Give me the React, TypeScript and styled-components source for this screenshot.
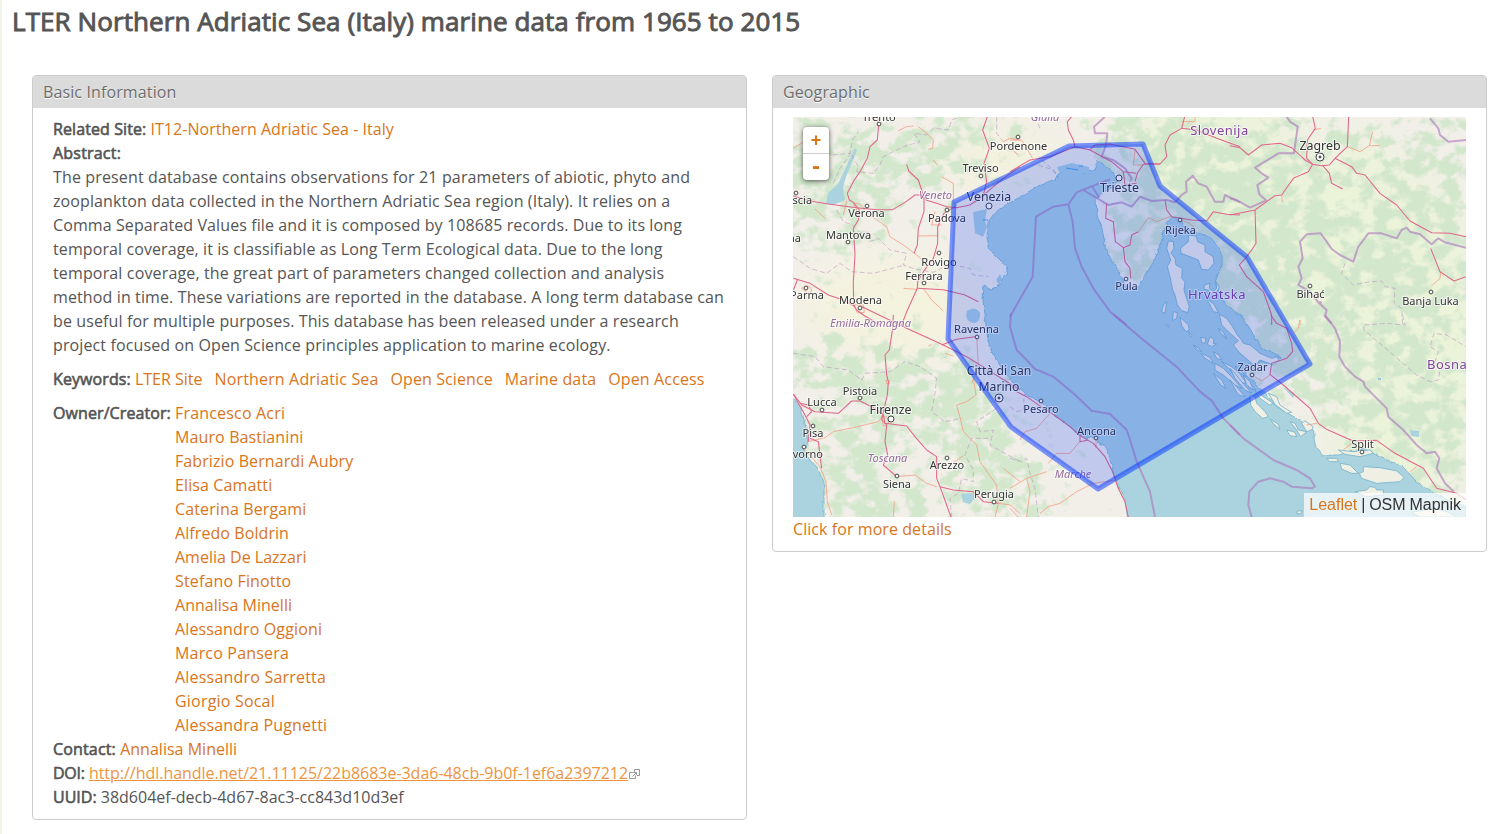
import React from 'react';
import styled, { createGlobalStyle } from 'styled-components';

const GlobalStyle = createGlobalStyle`
  body {
    margin: 0;
    background: #fff;
    color: #555;
    font: 16px/24px 'Open Sans', sans-serif;
  }
`;

const Page = styled.main`
  box-sizing: border-box;
  width: 1502px;
  height: 834px;
  overflow: hidden;
  border-left: 2px solid #f2f4ec;
`;

const Title = styled.h1`
  margin: 0;
  padding: 3px 0 0 10px;
  height: 71px;
  box-sizing: border-box;
  font-size: 26px;
  line-height: 36px;
  font-weight: 400;
  letter-spacing: 0.085px;
  white-space: nowrap;
  -webkit-text-stroke: 0.95px #555;
`;

const Columns = styled.div`
  display: grid;
  grid-template-columns: 715px 715px;
  gap: 25px;
  align-items: start;
  padding: 4px 0 0 30px;
`;

const Panel = styled.section`
  border: 1px solid #ccc;
  border-radius: 4px;
  overflow: hidden;
`;

const PanelHeader = styled.h2`
  margin: 0;
  padding: 4px 10px;
  background: #dbdbdb;
  color: #6c6c6c;
  font-size: 16px;
  line-height: 24px;
  font-weight: 400;
  letter-spacing: 0.12px;
  text-shadow: 0 1px 0 #fff;
`;

const PanelBody = styled.div`
  padding: 9px 20px 10px;
`;

const Label = styled.span<{ $track?: number }>`
  letter-spacing: ${(p) => p.$track ?? 0.09}px;
  -webkit-text-stroke: 0.62px #555;
`;

const Link = styled.a<{ $track?: number }>`
  color: #d9751a;
  letter-spacing: ${(p) => p.$track ?? 0}px;
  text-decoration: none;
`;

const HandleLink = styled(Link)`
  color: #ee9440;
  text-decoration: underline;
`;

const Abstract = styled.p`
  margin: 0 0 10px;
`;

const AbstractLine = styled.span<{ $track: number }>`
  display: block;
  white-space: nowrap;
  letter-spacing: ${(p) => p.$track}px;
`;

const Keywords = styled.div`
  display: flex;
  gap: 12px;
  margin-bottom: 10px;
`;

const Owners = styled.div`
  display: grid;
  grid-template-columns: 122px 1fr;
`;

const OwnerList = styled.div`
  display: flex;
  flex-direction: column;
  align-items: flex-start;
`;

const MapFrame = styled.div`
  position: relative;
  width: 673px;
  height: 400px;
  overflow: hidden;
  background: #f2efe9;
`;

const MapDrawing = styled.svg`
  display: block;
`;

const ZoomControl = styled.div`
  position: absolute;
  left: 10px;
  top: 10px;
  width: 26px;
  border-radius: 4px;
  background: #fff;
  box-shadow: 0 1px 5px rgba(0, 0, 0, 0.65);
`;

const ZoomButton = styled.div<{ $divided?: boolean }>`
  height: 26px;
  border-bottom: ${(p) => (p.$divided ? '1px solid #ccc' : '0')};
  color: #d9751a;
  text-align: center;
  font: bold 18px/26px 'Liberation Sans', sans-serif;
`;

const Minus = styled(ZoomButton)`
  font-size: 24px;
  line-height: 24px;
`;

const Attribution = styled.div`
  position: absolute;
  right: 0;
  bottom: 0;
  padding: 0 5px;
  background: rgba(255, 255, 255, 0.7);
  color: #333;
  font: 16px/24px 'Liberation Sans', sans-serif;
  word-spacing: -0.6px;
`;

const ExternalIcon = styled.svg`
  margin-left: 1px;
`;

const abstractLines: [string, number][] = [
  ['The present database contains observations for 21 parameters of abiotic, phyto and', 0.139],
  ['zooplankton data collected in the Northern Adriatic Sea region (Italy). It relies on a', 0.1],
  ['Comma Separated Values file and it is composed by 108685 records. Due to its long', 0.1],
  ['temporal coverage, it is classifiable as Long Term Ecological data. Due to the long', 0.097],
  ['temporal coverage, the great part of parameters changed collection and analysis', 0.146],
  ['method in time. These variations are reported in the database. A long term database can', 0.12],
  ['be useful for multiple purposes. This database has been released under a research', 0.115],
  ['project focused on Open Science principles application to marine ecology.', 0.12],
];

const keywords: [string, number][] = [
  ['Northern Adriatic Sea', 0.15], ['Open Science', 0.09], ['Marine data', 0.13], ['Open Access', 0.13],
];

const owners: [string, number][] = [
  ['Francesco Acri', 0.18], ['Mauro Bastianini', 0.12], ['Fabrizio Bernardi Aubry', 0.09], ['Elisa Camatti', 0.12],
  ['Caterina Bergami', 0.12], ['Alfredo Boldrin', 0.08], ['Amelia De Lazzari', 0], ['Stefano Finotto', 0.15],
  ['Annalisa Minelli', 0.02], ['Alessandro Oggioni', 0.14], ['Marco Pansera', 0.18], ['Alessandro Sarretta', 0.2],
  ['Giorgio Socal', 0.2], ['Alessandra Pugnetti', 0.18],
];

type Sheet = { x: number; y: number; roads?: string[]; minor?: string[]; borders?: string[]; regions?: string[] };

// Line work of the map, one sheet per map quadrant, at three units per pixel.
const sheets: Sheet[] = [
  {
    x: -3, y: -2,
    roads: [
      'M262,5 L266,30 262,75 240,95 232,130 210,170 190,200 172,235 178,255 190,262 208,285 205,315 190,340 195,420 190,500 191,570 200,585 220,600 270,630',
      'M10,243 L60,258 120,268 200,278 260,284 308,284 345,262 375,240 395,240 410,256 440,265 470,275 500,278 540,270 575,245 640,190 690,155',
      'M350,148 L356,168 385,195 395,225 402,255 402,290 385,340 382,390 372,415',
      'M592,5 L578,45 598,100 582,145 590,200 580,240 555,262',
      'M495,275 L462,295 443,335 443,385 430,430 400,470 383,500 382,520 350,590 335,630',
      'M382,520 L460,524 525,540 565,560',
      'M10,490 L60,505 115,540 160,555 195,575', 'M10,525 L22,495',
    ],
    minor: [
      'M240,300 L265,318 290,335 300,365 340,390 380,420 395,433', 'M10,100 L50,75 85,50', 'M325,47 L350,35 370,33',
      'M385,35 L410,55 430,75 428,100 415,103', 'M430,135 L442,150', 'M385,363 L443,362', 'M340,520 L382,523',
      'M400,520 L425,555 460,588', 'M455,185 L490,205 490,270', 'M640,80 L660,70 690,75 M650,90 L685,120', 'M170,258 L160,300 M75,282 L105,310',
      'M190,265 C215,260 240,295 205,294 Z', 'M435,290 L425,330 455,330', 'M35,520 C60,500 75,530 55,535 Z', 'M190,570 h30 l3,22 -20,2 Z',
    ],
    regions: [
      'M128,120 L180,115 188,75 205,50 M185,120 L205,155 200,170 250,175 270,150 280,125 305,112 340,95 390,80 372,55 410,60 430,40 475,45 485,15 510,5 M620,5 L620,55 640,80 665,95 690,95 M140,285 L160,320 188,330 208,352 242,352 238,380 265,370 300,405 350,415 340,450 375,462 430,472 480,448 540,460 550,480 595,485 M10,425 L60,460 110,475 150,445 185,470 250,475 345,450 M130,205 L150,160 190,105',
    ],
  },
  {
    x: 217, y: -2,
    roads: [
      'M185,5 L172,20 175,45 190,75 195,95 240,105 305,140 340,170 378,175 M0,170 L60,135 120,125 195,95 240,104 255,90 300,87 375,103 405,145 450,147',
      'M524,5 L515,40 480,60 465,90 470,125 450,147 400,148 382,175 375,200', 'M515,40 L560,45 620,70 690,95 M340,170 L345,210 380,205',
      'M290,265 L287,310 310,320 316,380 340,398 345,440 360,460 362,490 M340,398 L360,390 365,360 385,350', 'M465,255 L470,285 485,305 545,315 590,318 610,290 650,298 690,300',
    ],
    minor: ['M0,75 L35,75 68,130 M515,20 L555,20 555,5', 'M385,350 L415,308 440,320 485,303 M510,315 L540,325 555,340', 'M375,105 L370,150 400,150'],
    borders: [
      'M285,5 L252,35 255,55 292,55 288,90 275,125 310,135 345,160 365,190 360,200', 'M220,225 L295,270 335,262 365,275 390,245 425,258 470,255 495,262 515,240 530,230 528,200 548,182 565,205 590,215 615,260 640,260 645,240 690,262',
      'M0,605 L68,485 78,305 130,275 175,268 200,232 255,210 300,193 M175,268 L188,320 195,400 215,455 250,520 300,590 350,630 M245,212 L268,248',
    ],
    regions: ['M75,5 L90,40 M85,150 L130,165 145,190 L135,170 85,125'],
  },
  {
    x: 437, y: -2,
    roads: [
      'M0,92 L30,98 55,120 95,90 150,85 185,98 225,135 248,148 L235,170 190,190 155,240 135,242 75,285 0,300',
      'M248,5 L256,40 232,75 230,130 248,148 275,152 298,150 315,130 352,95 356,5', 'M315,130 L365,155 380,175 405,180 450,235 500,270 540,318 605,353 660,355 708,365',
      'M277,150 L298,175 305,205 338,222', 'M75,285 L78,385 65,405 50,425 28,450 50,485 100,530 125,600 125,630', 'M602,400 L630,470 672,498 708,485',
    ],
    minor: ['M352,95 L390,110 418,92 428,50 M418,92 L448,92', 'M250,45 L273,40', 'M605,512 L630,490 632,470 M155,240 L157,260 M210,615 L210,630'],
    borders: [
      'M170,5 L180,20 203,35 192,115 145,115 75,158 95,175 115,188 82,210 88,238 108,256 60,278 20,255 0,250',
      'M275,565 L268,560 M240,530 L205,510 215,490 205,455 218,430 210,380 230,358 272,355 290,380 305,402 330,420 370,440 385,395 415,355 455,355 500,370 515,345 530,338 540,350 570,358 605,388 625,370 645,382 708,398',
      'M600,10 L625,40 630,60 655,80 708,75', 'M240,530 L265,562 290,585 285,605 305,625',
    ],
    regions: ['M345,445 L335,475 370,510 420,500 455,498 465,515 495,520 492,565 515,580 518,630'],
  },
  {
    x: -3, y: 198,
    roads: [
      'M216,-25 L340,35 460,90 530,125 690,225', 'M310,0 L308,40 298,105 285,120 290,180 295,200 292,240 280,290 275,315 290,330 285,380 293,420 280,450 320,485',
      'M10,237 L35,270 75,290 145,295 185,258 210,258 245,275 280,300 285,325 350,333 375,365 410,405 440,425 440,490 450,515 470,570 483,606',
      'M10,237 L45,300 60,330 55,380 M30,265 L55,270 65,290 50,305 M60,370 L85,380 95,460 M450,515 L490,525 550,530 580,560 625,565 M455,90 L500,73 555,65',
    ],
    minor: [
      'M55,380 L105,368 130,350 190,338 265,320 278,303', 'M550,190 L558,240 530,260 500,270 512,315 520,350 560,390 570,440 620,510 625,565 615,606',
      'M320,485 L375,480 410,505 440,515', 'M42,400 L90,455 108,500 112,560 125,600 M490,443 L520,422 M545,205 L565,150 560,65 M640,460 L690,500 M625,565 L660,570 690,595 M313,560 L310,606 M415,93 l8,-4 M465,115 l25,8',
      'M275,305 C300,300 305,335 280,332 Z', 'M288,195 l10,2 0,10 -8,-1 Z',
    ],
    regions: ['M10,115 L75,125 100,155 175,165 215,195 225,175 300,170 345,140 390,155 440,190 435,235 425,290 465,320 515,310 M620,280 L560,320 570,350 610,345 600,390 690,440 M595,370 L545,370 525,420 550,465 550,500 515,490 505,535 480,550 485,606'],
  },
  {
    x: 217, y: 198,
    roads: ['M20,230 L50,245 100,280 125,295 180,335 215,365 L250,385 285,425 310,475 325,520 345,560 355,606', 'M210,360 L210,380 235,375'],
    minor: ['M120,295 L80,340 45,350 30,375 M210,378 L180,415 140,415 115,445', 'M320,495 L250,505 200,530 150,565 115,575 90,595 M258,370 L258,400 M0,520 L50,490 110,470 M50,490 L60,530 50,606 M0,580 L25,606'],
    borders: ['M3,-5 L0,35 20,105 50,135 75,162 130,185 190,235 245,287 300,297 350,345 362,380 380,440 420,530 435,606', 'M312,0 L400,75 500,155 570,230 605,257 640,310 690,360'],
    regions: ['M0,430 L35,440 50,430 60,475 75,520 85,606 M0,275 L20,290 40,285 42,250'],
  },
  {
    x: 437, y: 198,
    roads: ['M122,0 L140,25 170,40 185,85 188,110 170,130 125,145 120,178 160,210 240,280 265,325 290,343 340,365 370,378 440,376 495,415 580,460 620,520 680,535 708,555'],
    minor: ['M75,185 L95,198 120,180 M210,15 L205,40 190,55 M260,325 L230,330 M340,405 L365,385 M540,470 L560,455'],
    borders: [
      'M285,0 L315,40 330,80 328,125 345,155 375,185 400,200 405,215 470,280 475,305 520,345 560,390 590,415 615,410 628,430 620,460 645,505 672,530',
      'M0,330 L40,370 130,435 200,465 240,490 255,515 245,520 185,515 160,500 120,490 85,500 58,530 55,570 65,606',
    ],
    regions: ['M518,0 L525,30 470,25 400,30 402,45 560,180 600,200 625,195 630,165 615,140 625,110 600,95 612,55 650,60 708,95'],
  },
];

// Wooded areas: centre, radii and density.
const forests: [number, number, number, number, number][] = [
  [40, 70, 65, 70, 0.8], [130, 50, 70, 30, 0.7], [165, 10, 90, 25, 0.7], [365, 30, 65, 45, 0.8], [420, 80, 60, 60, 0.95],
  [480, 50, 50, 50, 0.8], [480, 130, 65, 55, 0.9], [455, 180, 50, 50, 0.95], [560, 35, 45, 35, 0.6], [560, 130, 60, 60, 0.6],
  [640, 60, 45, 60, 0.75], [625, 140, 60, 60, 0.65], [500, 230, 55, 55, 0.7], [600, 200, 80, 55, 0.65], [590, 270, 70, 60, 0.65],
  [640, 330, 50, 80, 0.7], [540, 290, 40, 40, 0.5], [345, 140, 40, 35, 0.8], [490, 210, 40, 30, 0.9], [500, 235, 35, 25, 0.85],
  [60, 245, 60, 30, 0.6], [120, 270, 80, 40, 0.8], [160, 300, 60, 45, 0.75], [70, 310, 60, 30, 0.6], [60, 355, 45, 45, 0.8],
  [90, 390, 50, 35, 0.75], [190, 335, 40, 50, 0.7], [170, 385, 40, 25, 0.6], [210, 365, 40, 45, 0.6], [240, 380, 35, 30, 0.6], [20, 260, 35, 30, 0.6],
  [340, 90, 25, 18, 0.7],
];

const meadows: [number, number, number, number][] = [
  [610, 170, 80, 110], [540, 170, 70, 60], [660, 240, 50, 100], [600, 330, 65, 70], [420, 60, 90, 90], [560, 90, 60, 70],
];

const kvarnerIslands = [
  'M55,93 L70,95 72,115 63,130 75,145 78,165 97,175 95,205 105,215 102,240 118,290 113,308 95,302 82,285 75,255 68,240 60,200 52,170 62,150 50,115 Z',
  'M115,75 L138,78 143,95 165,105 165,125 190,140 192,160 175,180 155,178 145,150 120,140 93,130 92,115 115,95 Z',
  'M50,275 L40,285 35,305 45,310 48,290 Z', 'M70,305 L82,308 80,325 68,332 Z', 'M50,343 l8,3 -2,6 -6,-3Z',
  'M90,322 L105,335 115,345 118,360 108,365 95,347 Z', 'M115,365 L127,376 122,380 Z',
  'M180,380 L192,388 190,400 200,402 185,410 172,403 Z', 'M152,382 L168,385 165,400 155,398 Z',
  'M163,225 L180,220 178,235 190,245 200,235 198,215 208,232 192,260 175,240 162,238 Z',
  'M170,265 L192,283 205,308 190,305 180,285 Z',
  'M208,312 L230,325 248,350 262,375 275,390 280,400 300,405 330,430 365,445 380,440 387,450 370,465 330,450 315,468 270,430 250,405 265,392 235,365 215,345 Z',
  'M130,405 L145,414 155,425 142,420 Z', 'M153,430 L180,442 190,460 165,445 Z', 'M190,425 L207,435 215,450 200,445 Z',
  'M195,460 L220,475 245,500 275,535 255,525 220,495 195,480 Z', 'M215,455 L245,470 268,490 290,520 275,518 240,480 Z',
  'M190,490 L215,510 228,535 212,525 Z', 'M280,495 L300,520 318,540 298,535 Z', 'M255,468 L275,485 288,500 265,485 Z',
  'M205,355 l15,12 10,20 -18,-18 Z',
];

const dalmatianIslands = [
  'M0,160 L15,175 35,200 65,235 45,225 15,190 Z', 'M0,195 L20,215 45,245 25,240 Z', 'M40,180 L60,200 70,225 50,210 Z',
  'M60,240 L75,245 80,265 105,290 115,305 98,310 75,290 62,270 Z', 'M75,228 L100,245 130,265 118,270 90,250 Z',
  'M115,235 L140,245 150,270 185,292 170,295 135,268 Z', 'M120,312 L145,328 150,343 132,328 Z',
  'M170,345 L195,352 200,365 180,362 Z', 'M180,320 L195,325 205,345 230,350 215,325 225,318 250,335 245,345 230,350 212,365 200,345 Z',
  'M290,430 L320,430 325,440 300,440 Z', 'M330,445 L360,450 385,475 365,475 335,462 Z',
  'M400,455 L450,458 500,468 522,487 510,500 440,505 395,490 388,475 400,470 Z',
  'M325,405 L370,410 420,405 430,415 390,425 345,418 Z',
  'M375,530 L410,525 420,515 435,517 440,525 460,525 460,540 410,545 Z', 'M545,592 L610,580 650,590 680,606 570,606 Z', 'M202,588 l14,0 -3,8 -12,0 Z', 'M635,555 L665,565 708,578 660,575 Z',
];

const labels: [string, number, number, number, string?][] = [
  ['Trento', 86, 4, 11], ['Pordenone', 225.5, 33, 11.1], ['Treviso', 187.5, 55, 11], ['Verona', 73.5, 100, 11],
  ['Padova', 154, 105, 11], ['Mantova', 55.5, 122, 11], ['Rovigo', 146, 149, 11.1], ['Ferrara', 131, 163, 11],
  ['Parma', 14, 182, 11], ['Modena', 67.5, 187, 11.1], ['Ravenna', 183.5, 216, 11.1], ['Pistoia', 67, 278, 11],
  ['Lucca', 29, 289, 11], ['Firenze', 97.5, 297, 12.4], ['Pisa', 20, 320, 11], ['Livorno', 10.5, 341, 11],
  ['Arezzo', 154, 352, 11], ['Siena', 104, 371, 11], ['Perugia', 201, 381, 11], ['Pesaro', 248, 296, 11],
  ['Ancona', 303.5, 318, 11.1], ['Venezia', 196, 84, 12.3], ['Trieste', 326.5, 75, 12.4], ['Rijeka', 387.5, 117, 11],
  ['Pula', 333.5, 173, 11], ['Zadar', 459.5, 254, 11], ['Split', 569.5, 331, 11], ['Bihać', 517.5, 181, 11],
  ['Banja Luka', 637.5, 188, 11], ['Zagreb', 527, 33, 12.4], ['Città di San', 206, 258, 12.2], ['Marino', 206, 274, 12.2],
  ['Brescia', 0.5, 87, 11], ['na', 1.5, 125, 11],
  ['Giulia', 252, 4, 11, 'region'], ['Veneto', 142.5, 82, 11, 'region'], ['Emilia-Romagna', 77.5, 210, 11, 'region'],
  ['Toscana', 94.5, 345, 11, 'region'], ['Marche', 280, 361, 11, 'region'],
  ['Slovenija', 426.5, 18, 13, 'country'], ['Hrvatska', 424, 182, 13, 'country'],
];

const towns: [number, number, number?][] = [
  [86, 7], [225, 20], [188, 59], [74, 89], [154, 93], [55, 125], [146, 136], [131, 166], [13, 171], [67, 191],
  [184, 220], [67, 281], [29, 293], [98, 302, 3], [20, 309], [11, 330], [154, 341], [104, 359], [201, 385],
  [248, 284], [303, 321], [196, 89, 3], [326, 61, 3], [387, 103], [333, 162], [459, 258], [569, 335],
  [517, 169], [638, 175], [3, 76],
];

const siteArea = '161,85 276,29 350,27 367,69 454,140 517,247 305,372 218,310 155,222';

const MapLines = ({ paths, color, width, dash, opacity = 1 }: {
  paths?: string[]; color: string; width: number; dash?: string; opacity?: number;
}) => (
  <g fill="none" stroke={color} strokeWidth={width * 3} strokeDasharray={dash} opacity={opacity} strokeLinejoin="round">
    {paths?.map((d) => <path key={d} d={d} />)}
  </g>
);

const AdriaticMap = () => (
  <MapDrawing width="673" height="400" viewBox="0 0 673 400">
    <defs>
      <filter id="woodland" x="0" y="0" width="673" height="400" filterUnits="userSpaceOnUse" colorInterpolationFilters="sRGB">
        <feGaussianBlur in="SourceGraphic" stdDeviation="14" result="soft" />
        <feTurbulence type="fractalNoise" baseFrequency="0.06 0.07" numOctaves="6" seed="8" result="noise" />
        <feColorMatrix in="noise" type="matrix" values="0 0 0 0 0  0 0 0 0 0  0 0 0 0 0  1 0 0 0 0" result="grain" />
        <feComposite in="soft" in2="grain" operator="arithmetic" k2="2.2" k3="5.5" k4="-3.75" result="mask" />
        <feFlood floodColor="#d3e7cd" />
        <feComposite in2="mask" operator="in" />
      </filter>
      <filter id="meadow" x="0" y="0" width="673" height="400" filterUnits="userSpaceOnUse">
        <feGaussianBlur stdDeviation="22" />
      </filter>
      <filter id="shore" x="-5%" y="-5%" width="110%" height="110%">
        <feTurbulence type="fractalNoise" baseFrequency="0.15" numOctaves="2" seed="3" />
        <feDisplacementMap in="SourceGraphic" scale="4" xChannelSelector="R" yChannelSelector="G" />
      </filter>
    </defs>
    <g filter="url(#meadow)" fill="#ebf3d9">
      {meadows.map(([x, y, rx, ry]) => <ellipse key={`${x}-${y}`} cx={x} cy={y} rx={rx} ry={ry} />)}
      <ellipse cx="100" cy="190" rx="90" ry="50" fill="#f4f3dd" />
      <ellipse cx="210" cy="45" rx="60" ry="30" fill="#f3f2dc" />
      <ellipse cx="490" cy="310" rx="50" ry="30" fill="#f2efe9" />
    </g>
    <g filter="url(#woodland)">
      {forests.map(([x, y, rx, ry, o]) => <ellipse key={`${x}-${y}`} cx={x} cy={y} rx={rx} ry={ry} fill="#000" opacity={o} />)}
    </g>
    <g fill="#aad3df" stroke="#72b3cc" strokeWidth="0.8" filter="url(#shore)">
      <path d="M335,402 L332,385 325,368 321,360 317,341 314,330 306,326 302,321 289,320 277,310 259,295 249,285 232,277 217,263 208,250 197,231 194,218 192,198 190,183 191,168 197,173 204,171 213,156 215,150 207,143 197,133 194,121 195,105 204,93 227,80 245,69 262,62 268,55 265,51 278,50 290,55 300,54 305,43 314,50 320,56 325,63 318,71 309,76 303,83 304,98 309,111 312,128 317,141 325,153 330,163 332,170 345,171 349,163 360,146 365,135 369,121 374,105 380,100 388,104 396,112 417,120 429,135 429,148 422,165 430,185 447,198 455,210 470,232 487,240 478,246 464,246 452,248 453,258 467,271 484,290 503,301 520,311 522,328 530,338 547,338 570,331 587,340 610,350 624,365 644,378 673,390 673,402 Z" />
      <path d="M-3,280 L8,290 14,315 15,330 10,332 23,350 31,365 31,402 -3,402 Z" />
    </g>
    <g fill="#aad3df">
      <path d="M62,31 L64,33 53,60 50,70 52,83 40,88 33,86 35,76 45,67 Z" />
      <path d="M180,95 l14,-3 -2,12 2,6 -4,10 -8,-4 z M174,194 q8,-6 13,2 q1,10 -7,10 q-9,-2 -6,-12 M264,50 l15,-4 17,4 0,6 -14,0 -16,-1 z M203,163 l4,-6 2,5 -3,6z" />
      <path d="M168,377 l13,-1 1,5 -5,6 -7,-2 z M617,313 l9,1 0,6 -8,-1z M490,270 l12,7 -2,4 z" />
    </g>
    <path d="M585,262 h3 M273,51 l12,2 M190,103 h5 M286,49 h4" stroke="#4aa5e8" />
    <g fill="#f0efe4" stroke="#72b3cc" strokeWidth="2.4">
      <g transform="translate(357 93) scale(.33333)">{kvarnerIslands.map((d) => <path key={d} d={d} />)}</g>
      <g transform="translate(437 198) scale(.33333)">{dalmatianIslands.map((d) => <path key={d} d={d} />)}</g>
    </g>
    {sheets.map((s) => (
      <g key={`${s.x}/${s.y}`} transform={`translate(${s.x} ${s.y}) scale(.33333)`}>
        <MapLines paths={s.regions} color="#b48cbc" width={0.8} dash="15 8" opacity={0.65} />
        <MapLines paths={s.borders} color="#ad78bb" width={2} opacity={0.62} />
        <MapLines paths={s.minor} color="#f6987d" width={0.75} />
        <MapLines paths={s.roads} color="#e0668a" width={1.05} />
      </g>
    ))}
    <g fill="#fff" stroke="#444" strokeWidth="1">
      {towns.map(([x, y, r = 1.9]) => <circle key={`${x}-${y}`} cx={x} cy={y} r={r} />)}
      <circle cx="527" cy="40" r="4" /><circle cx="527" cy="40" r="1" fill="#444" />
      <circle cx="206" cy="281" r="4" /><circle cx="206" cy="281" r="1" fill="#444" />
    </g>
    <g fontFamily="'Noto Sans', sans-serif" textAnchor="middle" fill="#333" stroke="#fff" strokeOpacity="0.65" strokeWidth="2" strokeLinejoin="round" paintOrder="stroke">
      {labels.map(([name, x, y, size, kind]) => (
        <text
          key={name + x} x={x} y={y} fontSize={size}
          fill={kind ? (kind === 'region' ? '#936a98' : '#83429a') : undefined}
          fontStyle={kind === 'region' ? 'italic' : undefined}
          letterSpacing={kind === 'country' ? 0.5 : undefined}
        >
          {name}
        </text>
      ))}
      <text x="634" y="252" fontSize="13" letterSpacing=".5" fill="#83429a" textAnchor="start">Bosna</text>
    </g>
    <polygon points={siteArea} fill="#03f" fillOpacity="0.2" stroke="#03f" strokeOpacity="0.5" strokeWidth="5" strokeLinejoin="round" />
  </MapDrawing>
);

export default function App() {
  return (
    <Page>
      <GlobalStyle />
      <Title>LTER Northern Adriatic Sea (Italy) marine data from 1965 to 2015</Title>
      <Columns>
        <Panel>
          <PanelHeader>Basic Information</PanelHeader>
          <PanelBody>
            <div><Label>Related Site:</Label> <Link $track={0.04}>IT12-Northern Adriatic Sea - Italy</Link></div>
            <div><Label $track={0.2}>Abstract:</Label></div>
            <Abstract>
              {abstractLines.map(([line, track]) => <AbstractLine key={line} $track={track}>{line}</AbstractLine>)}
            </Abstract>
            <Keywords>
              <span><Label>Keywords:</Label> <Link>LTER Site</Link></span>
              {keywords.map(([k, track]) => <Link key={k} $track={track}>{k}</Link>)}
            </Keywords>
            <Owners>
              <Label>Owner/Creator:</Label>
              <OwnerList>{owners.map(([o, track]) => <Link key={o} $track={track}>{o}</Link>)}</OwnerList>
            </Owners>
            <div><Label $track={0.16}>Contact:</Label> <Link $track={0.02}>Annalisa Minelli</Link></div>
            <div>
              <Label $track={-0.25}>DOI:</Label>{' '}
              <HandleLink $track={-0.025}>http://hdl.handle.net/21.11125/22b8683e-3da6-48cb-9b0f-1ef6a2397212</HandleLink>
              <ExternalIcon width="12" height="10" viewBox="0 0 12 10" fill="none" stroke="#999">
                <path d="M4.5,3.5 H0.5 V9.5 H6.5 V6.5 M5.5,3 V0.5 H10.5 V6.5 H8 M3.5,7.5 L7.5,3.5 M4.5,3.5 H7.5 V6" />
              </ExternalIcon>
            </div>
            <div><Label $track={0}>UUID:</Label> 38d604ef-decb-4d67-8ac3-cc843d10d3ef</div>
          </PanelBody>
        </Panel>
        <Panel>
          <PanelHeader>Geographic</PanelHeader>
          <PanelBody>
            <MapFrame>
              <AdriaticMap />
              <ZoomControl>
                <ZoomButton $divided>+</ZoomButton>
                <Minus>-</Minus>
              </ZoomControl>
              <Attribution><Link>Leaflet</Link> | OSM Mapnik</Attribution>
            </MapFrame>
            <Link $track={0.07}>Click for more details</Link>
          </PanelBody>
        </Panel>
      </Columns>
    </Page>
  );
}
